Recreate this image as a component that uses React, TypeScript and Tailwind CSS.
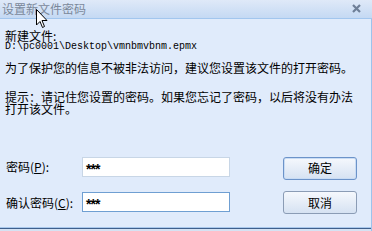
import React from "react";

const cjk = "font-['Noto_Sans_CJK_SC',sans-serif]";

const Cursor = () => (
    <svg
        className="absolute left-[36px] top-[9px]"
        width="12"
        height="20"
        viewBox="0 0 12 20"
    >
        <path
            d="M0.5 0.5 L0.5 16 L4 12.5 L6.5 18.5 L8.5 17.5 L6 11.5 L11 11.5 Z"
            fill="#ffffff"
            stroke="#000000"
            strokeWidth="1"
            strokeLinejoin="miter"
        />
    </svg>
);

const DlgButton = ({
    label,
    isDefault,
}: {
    label: string;
    isDefault?: boolean;
}) => (
    <button
        className={`w-[74px] h-[23px] rounded-[3px] border text-[12px] leading-none text-black bg-gradient-to-b from-[#f5f8fd] to-[#d6e2f2] ${
            isDefault
                ? "border-[#6c93c9] shadow-[inset_0_0_0_1px_#c9dcf4]"
                : "border-[#8b9cb5]"
        } ${cjk}`}
    >
        {label}
    </button>
);

const PwdField = ({ focused }: { focused?: boolean }) => (
    <div
        className={`w-[148px] h-[20px] bg-white border flex items-center pl-[3px] ${
            focused ? "border-[#6f9fd2]" : "border-[#c8d6e6]"
        }`}
    >
        <span className="font-['Liberation_Sans',sans-serif] text-[14px] font-bold leading-none tracking-[-1px] pt-[4px]">
            ***
        </span>
    </div>
);

export default function App() {
    return (
        <div
            className={`relative w-[372px] h-[231px] overflow-hidden bg-[#e0ebfb] flex flex-col ${cjk}`}
        >
            {/* title bar */}
            <div className="h-[19px] flex items-center justify-between bg-gradient-to-b from-[#dfe9f8] to-[#c4d9f3] border-b border-[#a2c6ee]">
                <span className="pl-[2px] text-[12px] leading-none text-[#7b889a]">
                    设置新文件密码
                </span>
                <svg
                    className="mr-[11px] mb-[1px]"
                    width="9"
                    height="9"
                    viewBox="0 0 9 9"
                >
                    <path
                        d="M1 1 L8 8 M8 1 L1 8"
                        stroke="#6e7f98"
                        strokeWidth="2.2"
                    />
                </svg>
            </div>

            {/* body */}
            <div className="flex-1 flex flex-col border-r border-[#9cc3ec] text-black">
                <div className="pl-[5px] pt-[11px] text-[12px] leading-[12px]">
                    新建文件:
                </div>
                <div className="pl-[5px] font-['Liberation_Mono',monospace] text-[10px] leading-[10px]">
                    D:\pc0001\Desktop\vmnbmvbnm.epmx
                </div>
                <div className="pl-[5px] mt-[9px] text-[12px] leading-[13px] whitespace-nowrap">
                    为了保护您的信息不被非法访问，建议您设置该文件的打开密码。
                </div>
                <div className="pl-[5px] mt-[17px] text-[12px] leading-[12px] whitespace-nowrap">
                    提示：请记住您设置的密码。如果您忘记了密码，以后将没有办法
                    <br />
                    打开该文件。
                </div>

                {/* form */}
                <div className="mt-[39px] flex flex-col gap-[9px]">
                    <div className="flex items-start">
                        <span className="w-[82px] shrink-0 pl-[6px] pt-[6px] text-[12px] leading-[13px] whitespace-nowrap">
                            密码(<u>P</u>):
                        </span>
                        <div className="mt-[3px]">
                            <PwdField />
                        </div>
                        <div className="ml-[53px]">
                            <DlgButton label="确定" isDefault />
                        </div>
                    </div>
                    <div className="flex items-start">
                        <span className="w-[82px] shrink-0 pl-[6px] pt-[7px] text-[12px] leading-[13px] whitespace-nowrap">
                            确认密码(<u>C</u>):
                        </span>
                        <div className="mt-[3px]">
                            <PwdField focused />
                        </div>
                        <div className="ml-[53px]">
                            <DlgButton label="取消" />
                        </div>
                    </div>
                </div>

                <div className="flex-1" />
                <div className="h-[1px] bg-[#a9c8ec]" />
                <div className="h-[1px] bg-[#3f5f8c]" />
                <div className="h-[2px] bg-[#d5e2f3]" />
            </div>

            <Cursor />
        </div>
    );
}
